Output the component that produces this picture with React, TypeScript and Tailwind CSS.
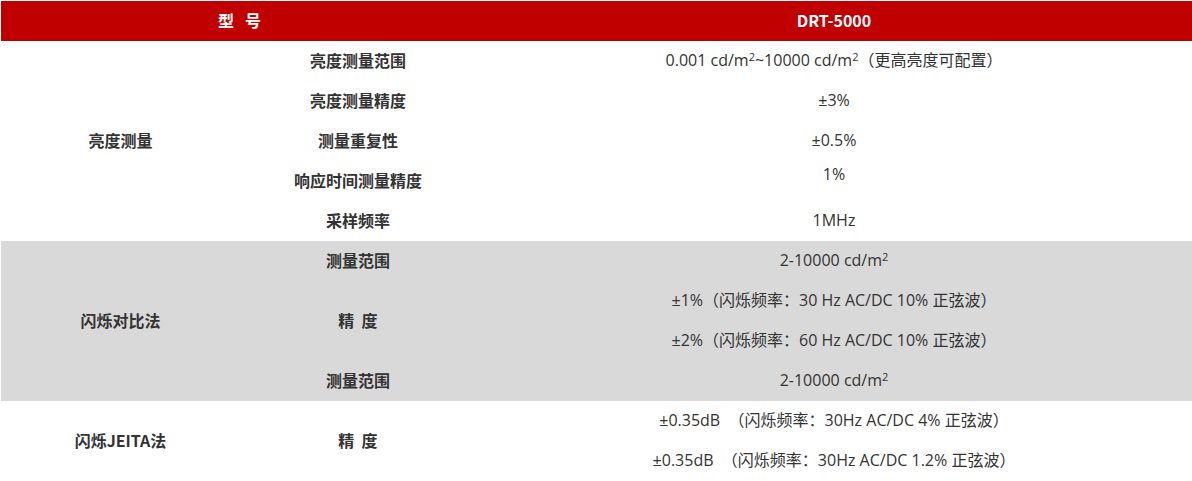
import React from 'react';

const M2 = () => (
  <>
    cd/m<span className="relative -top-[5px] text-[11px] leading-none">2</span>
  </>
);

function Label({ children, className = '' }: { children: React.ReactNode; className?: string }) {
  return (
    <div className={`flex items-center justify-center pb-[2px] font-bold text-[16px] text-[#333] ${className}`}>
      {children}
    </div>
  );
}

function Value({ children, className = '' }: { children: React.ReactNode; className?: string }) {
  return (
    <div
      className={`flex items-center justify-center pb-[2px] text-[16px] text-[#333] whitespace-nowrap [font-family:'Open_Sans','Noto_Sans_CJK_SC',sans-serif] ${className}`}
    >
      <span>{children}</span>
    </div>
  );
}

export default function App() {
  return (
    <div className="w-[1192px] h-[481px] bg-white pl-px pt-px [font-family:'Noto_Sans_CJK_SC',sans-serif]">
      <div className="grid grid-cols-[239px_236px_1fr] auto-rows-[40px]">
        {/* Header */}
        <div className="col-span-2 bg-[#c00000] text-white font-bold text-[16px] flex items-center justify-center pb-[2px] pl-[2px]">
          型&nbsp;&nbsp;&nbsp;号
        </div>
        <div className="bg-[#c00000] text-white font-bold text-[16px] flex items-center justify-center pb-[2px]">
          DRT-5000
        </div>

        {/* 亮度测量 */}
        <Label className="row-span-5">亮度测量</Label>
        <Label>亮度测量范围</Label>
        <Value>
          0.001&nbsp;<M2 />~10000&nbsp;<M2 />（更高亮度可配置）
        </Value>
        <Label>亮度测量精度</Label>
        <Value>±3%</Value>
        <Label>测量重复性</Label>
        <Value>±0.5%</Value>
        <Label>响应时间测量精度</Label>
        <Value className="!items-start pt-[1px]">1%</Value>
        <Label>采样频率</Label>
        <Value>1MHz</Value>

        {/* 闪烁对比法 */}
        <Label className="row-span-4 bg-[#d9d9d9]">闪烁对比法</Label>
        <Label className="bg-[#d9d9d9]">测量范围</Label>
        <Value className="bg-[#d9d9d9]">
          2-10000&nbsp;<M2 />
        </Value>
        <Label className="row-span-2 bg-[#d9d9d9]">精&nbsp;&nbsp;度</Label>
        <Value className="bg-[#d9d9d9]">±1%（闪烁频率：30 Hz AC/DC 10% 正弦波）</Value>
        <Value className="bg-[#d9d9d9]">±2%（闪烁频率：60 Hz AC/DC 10% 正弦波）</Value>
        <Label className="bg-[#d9d9d9]">测量范围</Label>
        <Value className="bg-[#d9d9d9]">
          2-10000&nbsp;<M2 />
        </Value>

        {/* 闪烁JEITA法 */}
        <Label className="row-span-2">闪烁JEITA法</Label>
        <Label className="row-span-2">精&nbsp;&nbsp;度</Label>
        <Value>±0.35dB&nbsp;&nbsp;（闪烁频率：30Hz AC/DC 4% 正弦波）</Value>
        <Value>±0.35dB&nbsp;&nbsp;（闪烁频率：30Hz AC/DC 1.2% 正弦波）</Value>
      </div>
    </div>
  );
}
